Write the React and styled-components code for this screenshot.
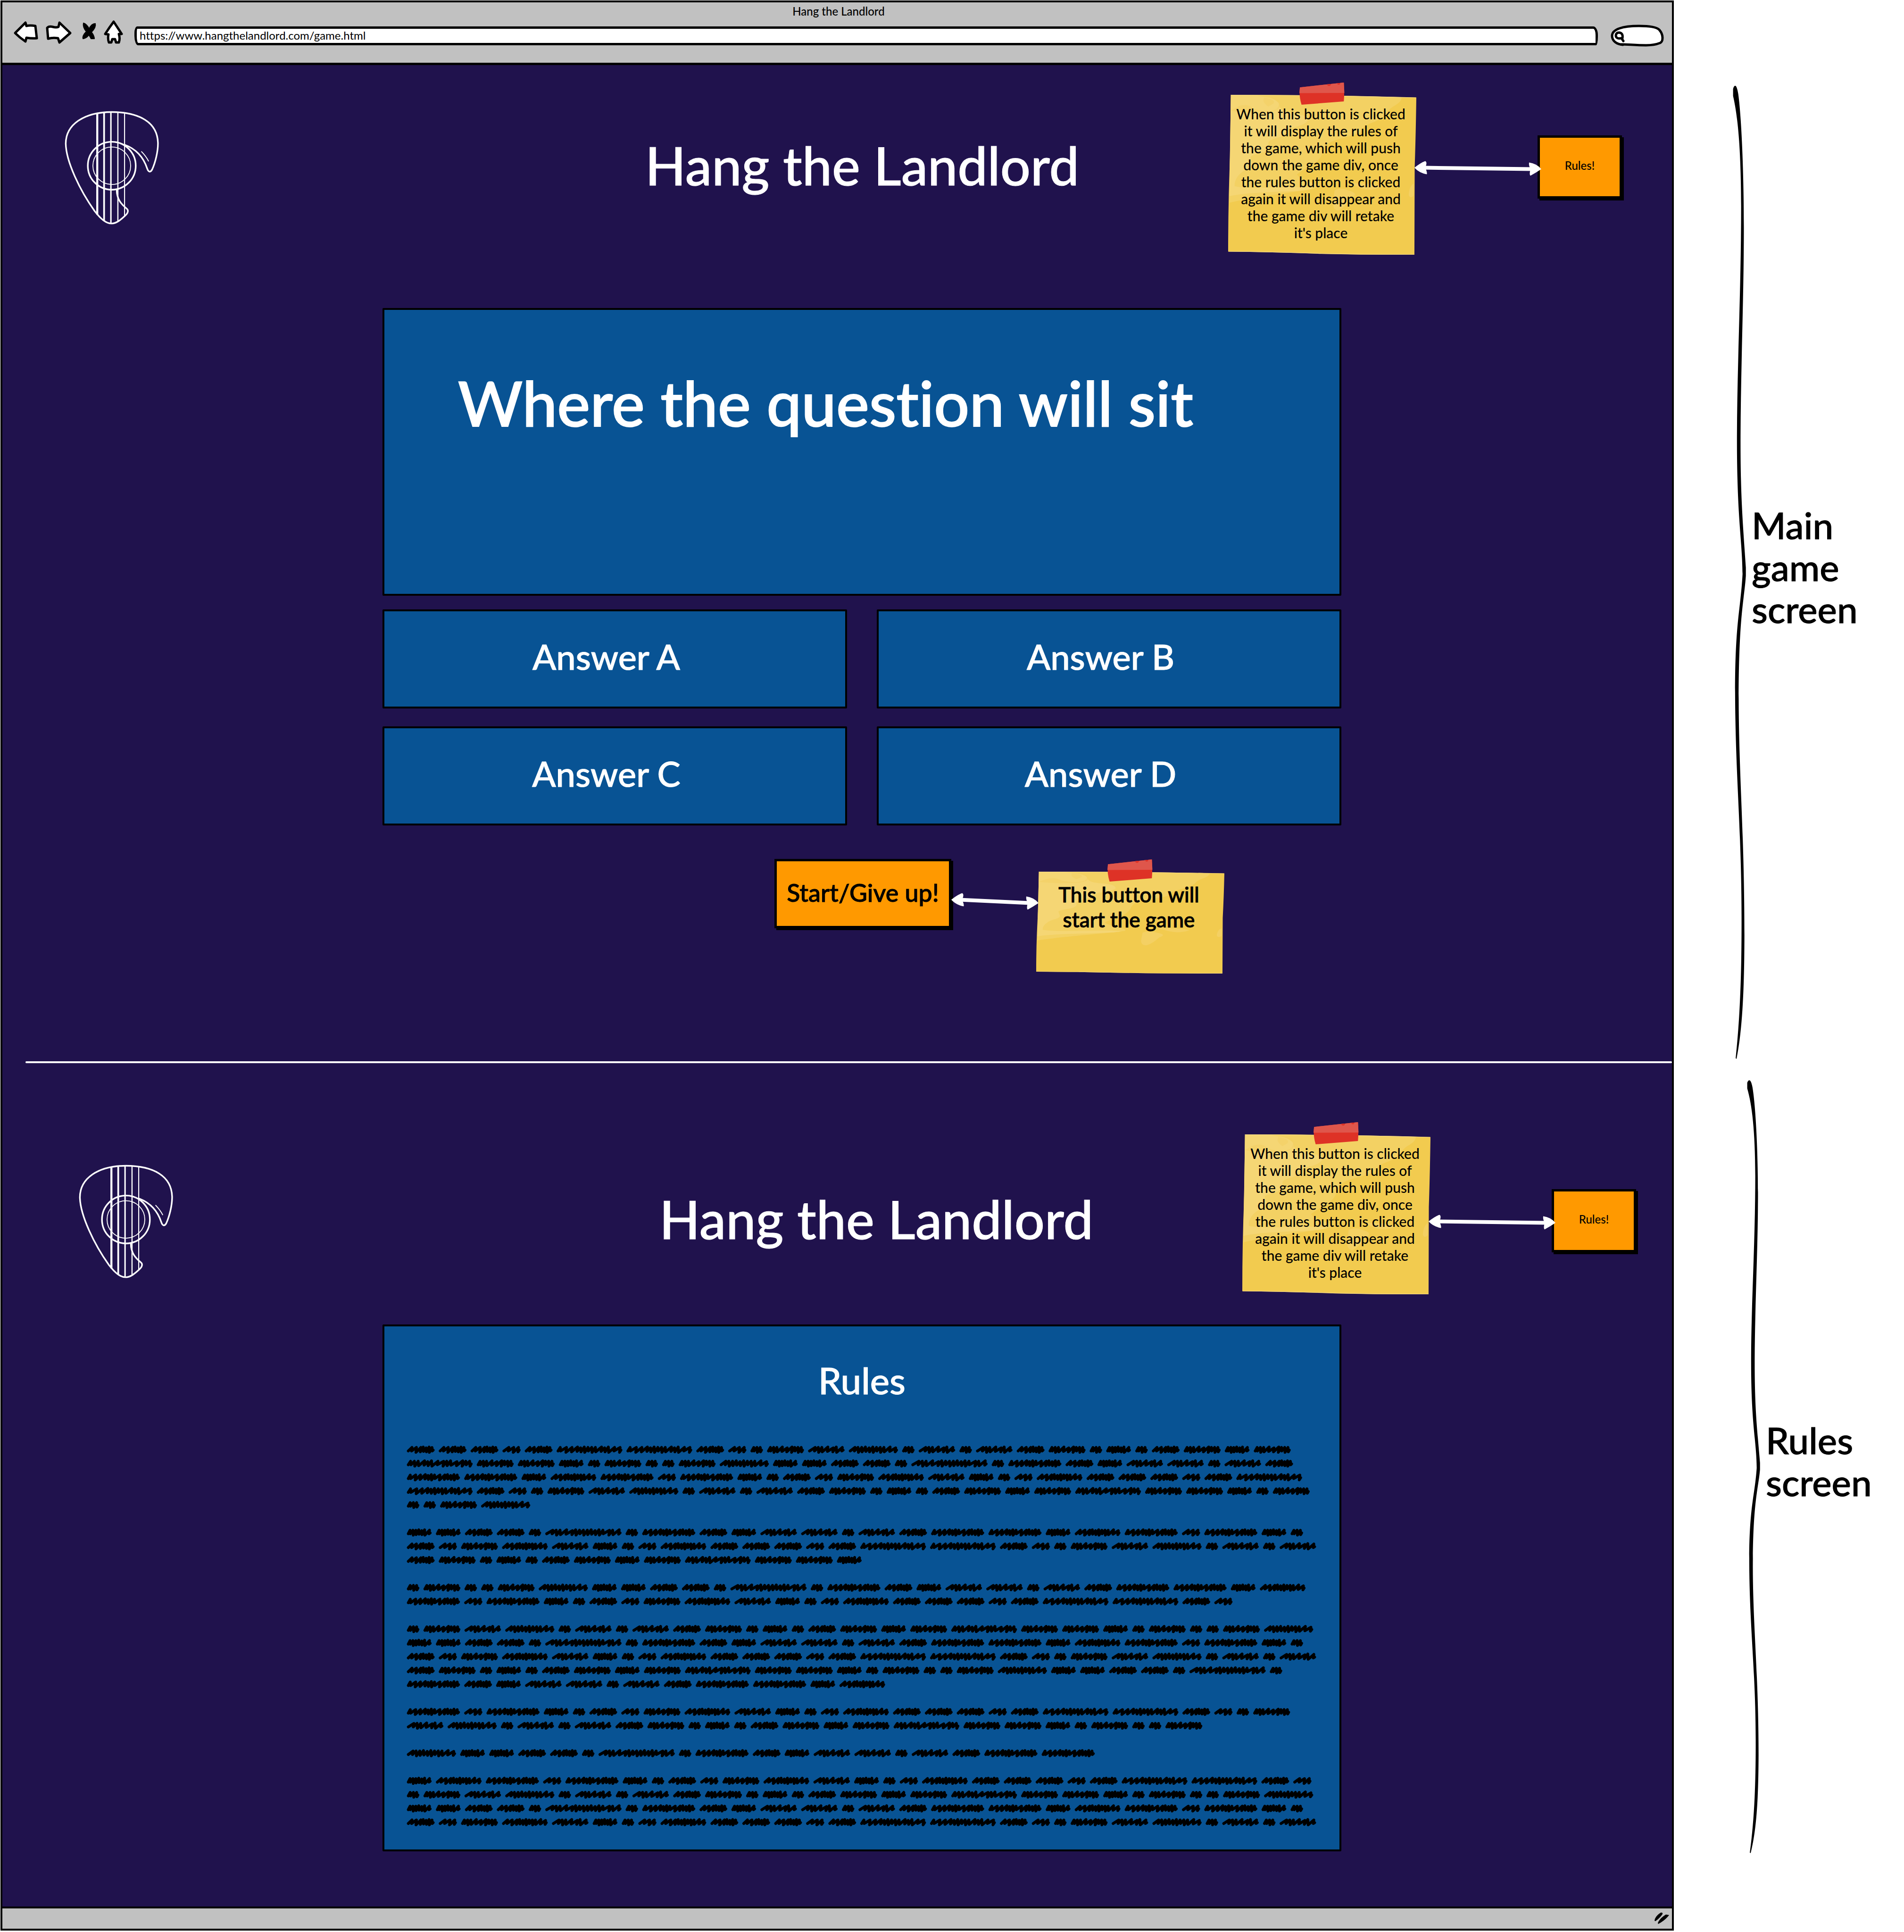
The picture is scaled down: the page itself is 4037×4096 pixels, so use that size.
import React from "react";
import styled, { createGlobalStyle } from "styled-components";

const ink = "#000000";
const night = "#20124d";
const blue = "#085394";
const chrome = "#c1c1c1";
const orange = "#ff9900";

const GlobalStyle = createGlobalStyle`
  *, *::before, *::after { box-sizing: border-box; }
  html, body { margin: 0; background: #ffffff; }
  body, button, input {
    font-family: Lato, "Open Sans", sans-serif;
    font-variant-ligatures: none;
  }
  h1, h2, p { margin: 0; font-weight: 500; }
  svg { display: block; overflow: visible; }
`;

const Page = styled.div`
  display: grid;
  grid-template-columns: minmax(0, 1fr) 488px;
  align-items: start;
`;

const BrowserWindow = styled.div`
  margin: 1px 0 0 1px;
  border: 4px solid ${ink};
  background: ${night};
`;

/* Browser chrome */

const TopBar = styled.header`
  display: flex;
  flex-direction: column;
  gap: 5px;
  padding: 5px 17px 24px 23px;
  background: ${chrome};
  border-bottom: 5px solid ${ink};
`;

const WindowTitle = styled.p`
  text-align: center;
  font-size: 24px;
  line-height: 28px;
`;

const NavRow = styled.nav`
  display: flex;
  align-items: center;
  gap: 8px;
`;

const IconButton = styled.button`
  padding: 0;
  border: 0;
  background: none;
`;

const AddressInput = styled.input`
  flex: 1;
  min-width: 0;
  height: 40px;
  margin: 0 18px 0 13px;
  padding: 0 8px 4px 6px;
  border: 5px solid ${ink};
  border-radius: 6px 10px 4px 8px / 14px 18px 18px 20px;
  background: #ffffff;
  color: ${ink};
  font-size: 24px;
`;

const SearchBox = styled.label`
  position: relative;
  width: 114px;
`;

const SearchInput = styled.input`
  position: absolute;
  inset: 14px 12px 14px 34px;
  width: 68px;
  padding: 0;
  border: 0;
  outline: 0;
  background: none;
  font-size: 24px;
`;

const StatusBar = styled.footer`
  display: flex;
  justify-content: flex-end;
  align-items: center;
  height: 47px;
  padding-right: 4px;
  background: ${chrome};
  border-top: 4px solid ${ink};
`;

/* Screens */

const Screen = styled.main`
  padding: ${(p) => p.$top}px 0 ${(p) => p.$bottom}px;
`;

const Banner = styled.div`
  display: flex;
  align-items: center;
  padding: 0 ${(p) => p.$right}px 0 ${(p) => p.$left}px;
`;

const SiteTitle = styled.h1`
  margin: 0 316px 0 auto;
  padding-bottom: 10px;
  color: #ffffff;
  font-size: 113px;
  line-height: 140px;
  white-space: nowrap;
  -webkit-text-stroke: 1px currentColor;
`;

const Board = styled.div`
  display: flex;
  flex-direction: column;
  margin: ${(p) => p.$top}px 701px 0 806px;
`;

const Panel = styled.section`
  border: 4px solid ${ink};
  border-radius: 2px;
  background: ${blue};
  color: #ffffff;
`;

const QuestionPanel = styled(Panel)`
  height: 610px;
  padding: 116px 156px 0;
`;

const Question = styled.h2`
  font-size: 132px;
  line-height: 160px;
  white-space: nowrap;
  -webkit-text-stroke: 2px currentColor;
`;

const Answers = styled.div`
  display: grid;
  grid-template-columns: 1fr 1fr;
  gap: 38px 63px;
  margin-top: 29px;
`;

const Answer = styled.button`
  height: 210px;
  padding: 0 36px 12px 0;
  border: 4px solid ${ink};
  border-radius: 2px;
  background: ${blue};
  color: #ffffff;
  font-size: 74px;
  font-weight: 500;
  -webkit-text-stroke: 1px currentColor;
`;

const Controls = styled.div`
  display: flex;
  align-items: flex-start;
  margin-top: 71px;
  padding-left: 831px;
`;

const ActionButton = styled.button`
  flex: none;
  width: ${(p) => p.$width}px;
  height: ${(p) => p.$height}px;
  padding: 0 0 6px;
  border: 5px solid ${ink};
  background: ${orange};
  box-shadow: 4px 4px 0 ${ink};
  color: ${ink};
  font-size: ${(p) => p.$size}px;
  font-weight: 500;
  -webkit-text-stroke: ${(p) => (p.$size > 30 ? 1 : 0)}px currentColor;
`;

const ArrowSlot = styled.div`
  position: relative;
  z-index: 1;
  flex: none;
  margin-top: ${(p) => p.$top}px;
`;

const Divider = styled.hr`
  height: 4px;
  margin: 0 0 0 49px;
  border: 0;
  border-radius: 2px;
  background: #ffffff;
`;

const RulesPanel = styled(Panel)`
  padding: 70px 47px 52px;
`;

const RulesTitle = styled.h2`
  margin-bottom: 96px;
  text-align: center;
  font-size: 78px;
  line-height: 88px;
  -webkit-text-stroke: 1px currentColor;
`;

/* Sticky notes */

const NoteBox = styled.aside`
  position: relative;
  flex: none;
  width: 399px;
  height: ${(p) => p.$height}px;
  margin: ${(p) => p.$margin};
  padding-top: ${(p) => p.$pad}px;
`;

const NotePaper = styled.svg`
  position: absolute;
  inset: 0;
  width: 100%;
  height: 100%;
`;

const Tape = styled.svg`
  position: absolute;
  top: -26px;
  left: 151px;
`;

const NoteText = styled.p`
  position: relative;
  padding-right: 6px;
  text-align: center;
  white-space: pre-line;
  font-size: ${(p) => p.$size}px;
  line-height: ${(p) => p.$line}px;
  -webkit-text-stroke: ${(p) => (p.$size > 30 ? 1 : 0)}px currentColor;
`;

/* Captions beside the window */

const Captions = styled.div`
  display: flex;
  flex-direction: column;
  gap: 39px;
  padding-top: 179px;
`;

const Caption = styled.div`
  display: flex;
  align-items: center;
  gap: 12px;
  padding-left: ${(p) => p.$left}px;
`;

const CaptionText = styled.p`
  padding-bottom: 24px;
  font-size: 78px;
  line-height: 89px;
  white-space: pre-line;
  -webkit-text-stroke: 1px currentColor;
`;

function Icon({ x, width, children }) {
  return (
    <svg
      width={width}
      height="66"
      viewBox={`${x} 43 ${width} 66`}
      fill="#ffffff"
      stroke={ink}
      strokeWidth="5"
      strokeLinejoin="round"
      strokeLinecap="round"
      aria-hidden="true"
    >
      {children}
    </svg>
  );
}

function Chrome() {
  return (
    <TopBar>
      <WindowTitle>Hang the Landlord</WindowTitle>
      <NavRow>
        <IconButton aria-label="Back">
          <Icon x={28} width={58}>
            <path d="M32 70 L54 48 L56 55 Q64 53 75 55 L78 81 Q68 82 56 80 L54 88 Q42 80 32 70Z" />
          </Icon>
        </IconButton>
        <IconButton aria-label="Forward">
          <Icon x={94} width={58}>
            <path d="M100 59 Q104 55 112 57 Q119 59 124 57 L126 48 L149 70 L126 90 L123 81 Q112 79 102 82 Z" />
          </Icon>
        </IconButton>
        <IconButton aria-label="Stop">
          <Icon x={160} width={50}>
            <path
              fill={ink}
              strokeWidth="2"
              d="M177 49 Q184 51 189 61 Q194 50 202 50 Q204 58 194 68 Q200 76 200 82 L193 82 Q191 77 188 74 Q184 81 176 82 Q174 76 183 67 Q175 57 177 49Z"
            />
          </Icon>
        </IconButton>
        <IconButton aria-label="Home">
          <Icon x={218} width={46}>
            <path d="M241 46 L258 72 L252 72 Q255 82 252 90 L246 90 L244 83 L238 83 L236 90 L231 90 Q228 82 230 73 L223 72 Q232 58 241 46Z" />
          </Icon>
        </IconButton>
        <AddressInput
          aria-label="Address"
          defaultValue="https://www.hangthelandlord.com/game.html"
        />
        <SearchBox aria-label="Search">
          <Icon x={3414} width={114}>
            <path d="M3441 95 C3428 94 3418 87 3418 76 C3418 62 3440 55 3475 55 C3500 55 3513 58 3518 63 C3524 70 3525 76 3525 80 C3525 86 3524 89 3520 91 C3510 95 3500 96 3490 96 C3470 96 3450 94 3438 94" />
            <path fill="none" d="M3440 81 Q3442 70 3433 69 Q3426 69 3426 76 Q3427 83 3438 81 L3442 87" />
          </Icon>
          <SearchInput type="search" aria-label="Search" />
        </SearchBox>
      </NavRow>
    </TopBar>
  );
}

function Logo() {
  return (
    <svg
      width="202"
      height="246"
      viewBox="80 57 656 799"
      fill="none"
      stroke="#ffffff"
      strokeWidth="11"
      strokeLinecap="round"
      role="img"
      aria-label="Guitar pick logo"
    >
      <path d="M495 303 C570 330 625 385 652 468 C660 492 674 496 686 474 C708 425 727 350 726 290 C722 150 600 79 408 78 C215 79 92 165 91 295 C93 420 190 620 290 760 C335 818 370 846 408 846 C440 845 470 820 500 792 C520 774 526 754 509 742 C475 715 443 680 442 615" />
      <ellipse cx="408" cy="448" rx="165" ry="165" />
      <ellipse cx="408" cy="448" rx="130" ry="129" strokeWidth="6" />
      <g strokeLinecap="butt">
        <path strokeWidth="14" d="M308 88 V785" />
        <path strokeWidth="12" d="M355 82 V825" />
        <path strokeWidth="10" d="M402 80 V842" />
        <path strokeWidth="8" d="M450 82 V832" />
        <path strokeWidth="7" d="M496 88 V795" />
      </g>
      <path strokeWidth="6" d="M613 351 Q642 380 661 416" />
    </svg>
  );
}

function Note({ height, margin, pad, size, line, children }) {
  return (
    <NoteBox $height={height} $margin={margin} $pad={pad}>
      <NotePaper viewBox="58 141 690 1101" preserveAspectRatio="none" aria-hidden="true">
        <path
          fill="#f2cb4f"
          d="M68 141 Q420 142 748 159 Q746 420 742 640 L741 1242 Q560 1243 400 1236 Q220 1224 58 1221 Q58 850 66 520Z"
        />
        <path
          fill="#f3d163"
          d="M68 141 Q420 142 694 158 C694 210 650 215 640 270 C600 350 560 320 545 400 C480 450 420 440 405 530 C395 620 340 640 310 690 C330 740 390 740 385 780 C330 810 180 830 62 885Z"
        />
        <path
          fill="#f5d674"
          d="M68 141 L165 146 C190 160 220 150 245 200 C245 300 345 240 350 320 C330 370 270 360 265 400 C260 450 205 430 205 480 C215 550 150 540 140 570 C140 610 160 630 120 660 C90 690 80 740 82 770 C150 800 280 760 370 785 C340 815 150 800 62 840Z"
        />
        <path
          fill="#f3cf60"
          d="M190 160 Q232 170 225 200 L205 222 Q180 190 190 160Z M68 250 Q120 180 150 235 Q200 270 235 240 Q260 190 215 160 L240 170 Q270 260 190 262 Q120 270 68 250Z"
          opacity="0.45"
        />
        <path
          fill="#f4d063"
          d="M448 800 Q470 775 500 800 Q540 820 510 850 Q480 930 460 938 Q440 930 443 880Z M720 830 Q722 770 738 752 L738 835 Q725 860 720 830Z M500 750 Q580 745 620 775 Q580 810 545 785Z"
        />
        <path fill="none" stroke="#f7dd8c" strokeWidth="3" d="M68 143 Q420 144 746 161 M60 1219 Q220 1222 400 1234 Q560 1241 740 1240" />
      </NotePaper>
      <Tape width="96" height="47" viewBox="319 57 166 153" preserveAspectRatio="none" aria-hidden="true">
        <path fill="#de3226" d="M321 90 L482 57 Q485 120 482 187 L327 210 Q317 150 321 90Z" />
        <path fill="#df564b" d="M321 90 L482 57 L484 129 L319 130Z" />
        <path fill="#de3226" d="M421 69 L435 67 Q434 80 427 81 Q421 78 421 69Z M457 62 L469 60 Q468 72 463 72 Q458 71 457 62Z" />
      </Tape>
      <NoteText $size={size} $line={line}>
        {children}
      </NoteText>
    </NoteBox>
  );
}

function RulesNote({ margin }) {
  return (
    <Note height={339} margin={margin} pad={22} size={30} line={36}>
      {`When this button is clicked
      it will display the rules of
      the game, which will push
      down the game div, once
      the rules button is clicked
      again it will disappear and
      the game div will retake
      it's place`}
    </Note>
  );
}

/* Double-headed arrow; its tips reach past the slot onto the parts it joins. */
function Arrow({ width, top = 0, drop, overLeft, overRight }) {
  const x1 = -overLeft;
  const x2 = width + overRight;
  const y1 = 20 - drop / 2;
  const y2 = 20 + drop / 2;
  return (
    <ArrowSlot $top={top}>
      <svg width={width} height="40" fill="#ffffff" aria-hidden="true">
        <path d={`M${x1 + 18} ${y1} L${x2 - 18} ${y2}`} stroke="#ffffff" strokeWidth="8" />
        <path d={`M${x1} ${y1} Q${x1 + 14} ${y1 - 11} ${x1 + 23} ${y1 - 14} Q${x1 + 28} ${y1 - 12} ${x1 + 23} ${y1} Q${x1 + 28} ${y1 + 12} ${x1 + 26} ${y1 + 14} Q${x1 + 10} ${y1 + 11} ${x1} ${y1}Z`} />
        <path d={`M${x2} ${y2} Q${x2 - 10} ${y2 - 12} ${x2 - 26} ${y2 - 14} Q${x2 - 27} ${y2 - 8} ${x2 - 23} ${y2} Q${x2 - 26} ${y2 + 12} ${x2 - 23} ${y2 + 14} Q${x2 - 12} ${y2 + 8} ${x2} ${y2}Z`} />
      </svg>
    </ArrowSlot>
  );
}

function SiteBanner({ left, right, noteMargin }) {
  return (
    <Banner $left={left} $right={right}>
      <Logo />
      <SiteTitle>Hang the Landlord</SiteTitle>
      <RulesNote margin={noteMargin} />
      <Arrow width={257} top={6} drop={3} overLeft={4} overRight={8} />
      <ActionButton $width={179} $height={134} $size={24}>
        Rules!
      </ActionButton>
    </Banner>
  );
}

/* Placeholder handwriting: each letter is one scribbled word.
   width and advance are in drawing units; "c" is a tight stroke,
   "o" a loose one and "h" an opening hook. */
const words = {
  a: { width: 29, advance: 38, strokes: "ccc" },
  b: { width: 42, advance: 51, strokes: "hoo" },
  c: { width: 57, advance: 66.5, strokes: "cccccco" },
  d: { width: 64, advance: 73, strokes: "ooocccc" },
  e: { width: 85, advance: 94, strokes: "cccoooccc" },
  f: { width: 84, advance: 93.3, strokes: "hccooco" },
  g: { width: 105, advance: 114.3, strokes: "oooccccccoo" },
  h: { width: 113, advance: 122, strokes: "occccccccoo" },
  i: { width: 122, advance: 131.3, strokes: "cooocccoocccc" },
  j: { width: 151, advance: 160, strokes: "cooocccccoccoo" },
  k: { width: 151, advance: 160, strokes: "cccoccooccoocc" },
  l: { width: 175, advance: 184, strokes: "hccooccccccccoco" },
};

const rowC = "ccddalaidcffafdiicgibica";
const rowD = "dbegfcabgdddbdjjdbaefhafaf";
const rowA = "aefhafafdeacadecekeecaeaaeh";

const paragraphs = [
  ["dddbdjjdbaefhafafdeacadece", "keecaeaaehccddalaidcffafd", "iicgibicadbegfcabgdddbdj", "jdbaefhafafdeacadecekeecae", "aaeh"],
  [rowC, rowD, "deacadecekeec"],
  ["aeaaehccddalaidcffafdiicg", "ibicadbegfcabgdddbdjjdb"],
  [rowA, rowC, rowD, "deacadecekeecaeaaehccddala", "idcffafdiicg"],
  ["ibicadbegfcabgdddbdjjdbae", "fhafafdeacadecekeecaeaae"],
  ["hccddalaidcffafdii"],
  ["cgibicadbegfcabgdddbdjjdb", rowA, rowC, rowD],
];

function scribble(kind, x, y) {
  const { width, strokes } = words[kind];
  const size = { c: 6, o: 9, h: 11 };
  const total = [...strokes].reduce((sum, s) => sum + size[s], 0);
  const unit = (width - 7) / total;
  let at = x + 4;
  let d = `M${at} ${y + 4}`;
  [...strokes].forEach((s, n) => {
    const step = size[s] * unit;
    const high = y - 4 + (n % 3 === 1 ? 1 : 0) - (n % 2);
    const low = y + 6 - (n % 3 === 0 ? 2 : 0) + (n % 2);
    const lean = s === "c" ? 0.6 : 0.85;
    d += ` L${(at + step * lean).toFixed(1)} ${high} L${(at + step * (s === "c" ? 0.7 : 0.75)).toFixed(1)} ${low}`;
    at += step;
  });
  return `${d} L${at.toFixed(1)} ${y + 2}`;
}

function ScribbledRules() {
  const marks = [];
  let row = 0;
  paragraphs.forEach((lines) => {
    lines.forEach((line) => {
      let x = 0;
      [...line].forEach((kind) => {
        marks.push(scribble(kind, x, 7 + row * 31.6));
        x += words[kind].advance;
      });
      row += 1;
    });
    row += 1;
  });
  return (
    <svg
      width="100%"
      viewBox="0 0 2086 867"
      fill="none"
      stroke={ink}
      strokeWidth="6.5"
      strokeLinejoin="round"
      strokeLinecap="round"
      role="img"
      aria-label="Rules text placeholder"
    >
      <path d={marks.join(" ")} />
    </svg>
  );
}

function Brace({ height }) {
  return (
    <svg width="28" height={height} viewBox="100 10 92 1526" preserveAspectRatio="none" aria-hidden="true">
      <path d="M102 17 C112 9 128 10 138 25 C160 60 178 150 177 240 C176 350 156 450 154 560 C153 660 172 700 191 765 L191 778 C180 815 142 840 141 970 C142 1090 181 1180 181 1340 C180 1430 165 1490 126 1533 L120 1532 C150 1470 162 1400 161 1310 C160 1170 118 1090 116 960 C116 850 155 830 168 775 C166 720 128 690 129 560 C130 450 158 330 158 200 C157 110 135 60 102 28Z" />
    </svg>
  );
}

export default function App() {
  return (
    <>
      <GlobalStyle />
      <Page>
        <BrowserWindow>
          <Chrome />
          <Screen $top={29} $bottom={186}>
            <SiteBanner left={131} right={106} noteMargin="34px 0 0" />
            <Board $top={113}>
              <QuestionPanel>
                <Question>Where the question will sit</Question>
              </QuestionPanel>
              <Answers>
                <Answer>Answer A</Answer>
                <Answer>Answer B</Answer>
                <Answer>Answer C</Answer>
                <Answer>Answer D</Answer>
              </Answers>
              <Controls>
                <ActionButton $width={375} $height={147} $size={52}>
                  Start/Give up!
                </ActionButton>
                <Arrow width={180} top={70} drop={7} overLeft={0} overRight={5} />
                <Note height={216} margin="27px 0 0" pad={22} size={44} line={53}>
                  {`This button will
                  start the game`}
                </Note>
              </Controls>
            </Board>
          </Screen>
          <Divider />
          <Screen as="section" $top={151} $bottom={117}>
            <SiteBanner left={161} right={76} noteMargin="0 0 26px" />
            <Board $top={38}>
              <RulesPanel>
                <RulesTitle>Rules</RulesTitle>
                <ScribbledRules />
              </RulesPanel>
            </Board>
          </Screen>
          <StatusBar>
            <svg width="34" height="28" viewBox="0 0 34 28" aria-hidden="true">
              <path d="M1 19 Q2 10 14 2 Q19 1 18 5 Q12 14 3 20Z M8 24 Q12 14 25 6 L32 7 Q24 18 9 26Z" />
            </svg>
          </StatusBar>
        </BrowserWindow>
        <Captions>
          <Caption $left={125}>
            <Brace height={2070} />
            <CaptionText>{"Main\ngame\nscreen"}</CaptionText>
          </Caption>
          <Caption $left={155}>
            <Brace height={1644} />
            <CaptionText>{"Rules\nscreen"}</CaptionText>
          </Caption>
        </Captions>
      </Page>
    </>
  );
}
